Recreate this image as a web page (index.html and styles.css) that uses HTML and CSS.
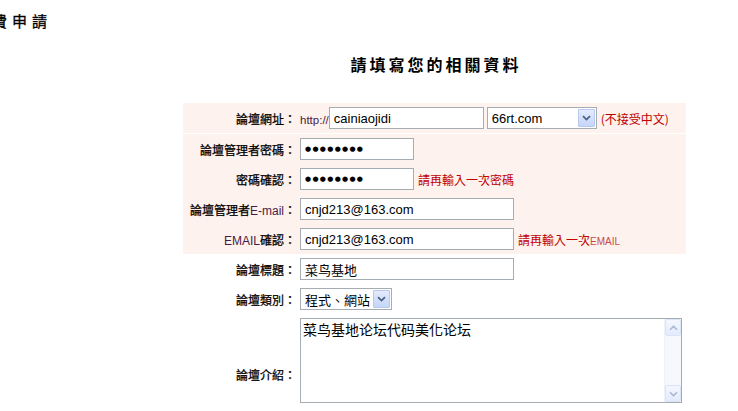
FILE: index.html
```html
<!DOCTYPE html>
<html lang="zh-Hant">
<head>
<meta charset="utf-8">
<title>免費申請</title>
<link rel="stylesheet" href="styles.css">
</head>
<body>
<h1 class="page-head">免費申請</h1>
<div class="wrap">
  <h2 class="title">請填寫您的相關資料</h2>
  <table class="form">
    <tr class="pink first">
      <td class="lbl">論壇網址：</td>
      <td class="fld"><div class="line">
        <span class="http">http://</span>
        <span class="box w155">cainiaojidi</span>
        <span class="sel w110"><span class="v">66rt.com</span><span class="btn"><svg width="9" height="6" viewBox="0 0 9 6"><path d="M1 1.2 L4.5 4.6 L8 1.2" fill="none" stroke="#4d6185" stroke-width="1.8"/></svg></span></span>
        <span class="note">(不接受中文)</span>
      </div></td>
    </tr>
    <tr class="pink">
      <td class="lbl">論壇管理者密碼：</td>
      <td class="fld"><div class="line"><span class="box w114 dots">●●●●●●●●</span></div></td>
    </tr>
    <tr class="pink">
      <td class="lbl">密碼確認：</td>
      <td class="fld"><div class="line"><span class="box w114 dots">●●●●●●●●</span><span class="note">請再輸入一次密碼</span></div></td>
    </tr>
    <tr class="pink">
      <td class="lbl">論壇管理者<span class="en">E-mail</span>：</td>
      <td class="fld"><div class="line"><span class="box w214">cnjd213@163.com</span></div></td>
    </tr>
    <tr class="pink">
      <td class="lbl"><span class="en">EMAIL</span>確認：</td>
      <td class="fld"><div class="line"><span class="box w214">cnjd213@163.com</span><span class="note">請再輸入一次<span class="note-en">EMAIL</span></span></div></td>
    </tr>
    <tr>
      <td class="lbl">論壇標題：</td>
      <td class="fld"><div class="line"><span class="box w214 cjk">菜鸟基地</span></div></td>
    </tr>
    <tr>
      <td class="lbl">論壇類別：</td>
      <td class="fld"><div class="line"><span class="sel w92"><span class="v cjk">程式、網站</span><span class="btn"><svg width="9" height="6" viewBox="0 0 9 6"><path d="M1 1.2 L4.5 4.6 L8 1.2" fill="none" stroke="#4d6185" stroke-width="1.8"/></svg></span></span></div></td>
    </tr>
    <tr class="tall">
      <td class="lbl">論壇介紹：</td>
      <td class="fld top">
        <div class="ta">
          <div class="ta-text">菜鸟基地论坛代码美化论坛</div>
          <div class="sb">
            <span class="sb-btn"><svg width="9" height="6" viewBox="0 0 9 6"><path d="M1 4.8 L4.5 1.4 L8 4.8" fill="none" stroke="#a9b8d6" stroke-width="1.6"/></svg></span>
            <span class="sb-track"></span>
            <span class="sb-btn"><svg width="9" height="6" viewBox="0 0 9 6"><path d="M1 1.2 L4.5 4.6 L8 1.2" fill="none" stroke="#a9b8d6" stroke-width="1.6"/></svg></span>
          </div>
        </div>
      </td>
    </tr>
  </table>
</div>
</body>
</html>
```

FILE: styles.css
```css
html {
  overflow: hidden;
}
body {
  margin: 0;
  background: #fff;
  color: #000;
  font-family: "Liberation Sans", "Noto Sans CJK TC", sans-serif;
}
.page-head {
  margin: 0 0 0 -28px;
  padding-top: 11px;
  font-size: 15px;
  line-height: 20px;
  font-weight: normal;
  letter-spacing: 5px;
  font-family: "Noto Sans CJK TC", sans-serif;
  -webkit-text-stroke: 0.3px #000;
}
.wrap {
  margin-left: 183px;
  width: 503px;
}
.title {
  margin: 23px 0 0 0;
  padding-left: 3px;
  text-align: center;
  font-size: 16px;
  line-height: 20px;
  font-weight: bold;
  letter-spacing: 3px;
  font-family: "Noto Sans CJK TC", sans-serif;
}
.form {
  margin-top: 29px;
  width: 503px;
  border-collapse: collapse;
  border-spacing: 0;
}
.form td {
  padding: 0;
  height: 30px;
  vertical-align: middle;
}
.form tr.pink td {
  background: #fdf2ed;
}
.form tr.first td {
  height: 30px;
  border-bottom: 1px solid #fff;
}
.form tr.tall td {
  height: 116px;
}
.lbl {
  width: 113px;
  text-align: right;
  font-size: 12px;
  white-space: nowrap;
  -webkit-text-stroke: 0.25px #000;
}
.en {
  color: #4a1a46;
  -webkit-text-stroke: 0;
}
.fld {
  padding-left: 4px !important;
}
.fld.top {
  vertical-align: top !important;
  padding-top: 4px !important;
}
.line {
  display: flex;
  align-items: center;
}
.http {
  font-size: 11.5px;
  color: #4a1a46;
  margin-top: 3px;
}
.box {
  display: flex;
  align-items: center;
  box-sizing: border-box;
  height: 22px;
  border: 1px solid #a5acb2;
  background: #fff;
  padding: 0 4px;
  font-size: 13px;
  color: #000;
  white-space: nowrap;
  overflow: hidden;
}
.w155 { width: 155px; }
.w114 { width: 114px; }
.w214 { width: 214px; }
.w110 { width: 110px; margin-left: 3px; }
.w92 { width: 92px; }
.cjk {
  font-family: "Noto Sans CJK SC", sans-serif;
  font-size: 13px;
}
.dots {
  font-family: "DejaVu Sans", sans-serif;
  font-size: 7px;
  letter-spacing: 1.3px;
  padding-left: 4px;
}
.sel {
  display: flex;
  align-items: stretch;
  box-sizing: border-box;
  height: 22px;
  border: 1px solid #a5acb2;
  background: #fff;
  font-size: 13px;
}
.sel .v {
  flex: 1;
  display: flex;
  align-items: center;
  padding-left: 4px;
  white-space: nowrap;
  overflow: hidden;
}
.sel .btn {
  width: 17px;
  flex: none;
  box-sizing: border-box;
  margin: 1px;
  display: flex;
  align-items: center;
  justify-content: center;
  border: 1px solid #b7c9ee;
  border-radius: 1px;
  background: linear-gradient(#e3ebfd, #c5d6f8);
}
.note {
  margin-left: 4px;
  font-size: 12px;
  color: #c00000;
  font-family: "Noto Sans CJK TC", sans-serif;
  white-space: nowrap;
}
.note-en {
  font-family: "Liberation Sans", sans-serif;
  font-size: 10px;
  color: #c84a4a;
}
.ta {
  display: flex;
  box-sizing: border-box;
  width: 382px;
  height: 85px;
  border: 1px solid #a5acb2;
  background: #fff;
}
.ta-text {
  flex: 1;
  padding: 1px 2px;
  font-family: "Noto Sans CJK SC", sans-serif;
  font-size: 14px;
  line-height: 18px;
}
.sb {
  width: 16px;
  display: flex;
  flex-direction: column;
  background: #f6f8fd;
  border-left: 1px solid #eef2fa;
}
.sb-btn {
  height: 17px;
  box-sizing: border-box;
  display: flex;
  align-items: center;
  justify-content: center;
  border: 1px solid #dbe4f6;
  border-radius: 2px;
  background: linear-gradient(#f4f7fe, #e2eafb);
}
.sb-track {
  flex: 1;
}
```
